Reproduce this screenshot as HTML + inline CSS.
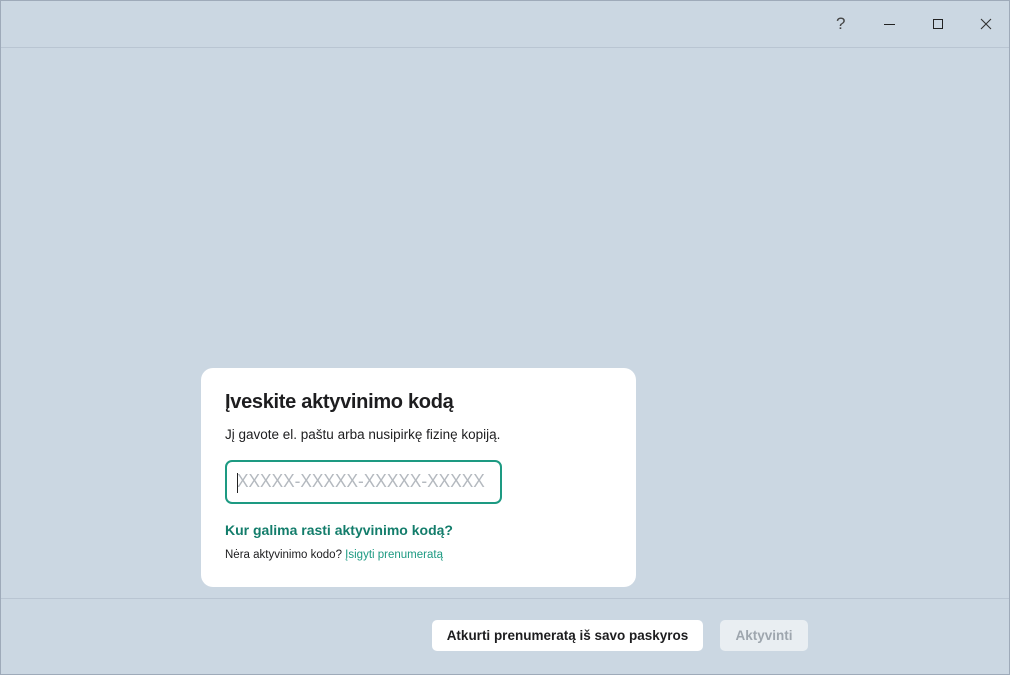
<!DOCTYPE html>
<html><head><meta charset="utf-8"><style>
*{margin:0;padding:0;box-sizing:border-box}
body{width:1010px;height:675px;background:#cbd7e2;font-family:"Liberation Sans",sans-serif;position:relative;overflow:hidden}
.frame{position:absolute;inset:0;border:1px solid #9eaab9}
.hl{position:absolute;left:1px;right:1px;height:1px;background:#b9c5d2}
.card{position:absolute;left:201px;top:368px;width:435px;height:219px;background:#fff;border-radius:12px}
h1{position:absolute;left:24px;top:23px;font-size:20px;font-weight:bold;color:#1d1d1f;letter-spacing:-0.3px;white-space:nowrap}
.sub{position:absolute;left:24px;top:59px;font-size:13.5px;color:#1d1d1f;white-space:nowrap}
.inp{position:absolute;left:24px;top:92px;width:277px;height:44px;border:2px solid #1d9a82;border-radius:7px;overflow:hidden}
.ph{position:absolute;left:10px;top:9px;font-size:18px;color:#b4b9bf;white-space:nowrap;transform:scaleX(0.96);transform-origin:left}
.cur{position:absolute;left:10px;top:11px;width:1px;height:20px;background:#222}
.link{position:absolute;left:24px;top:154px;font-size:14px;font-weight:bold;color:#137d6b;white-space:nowrap}
.no{position:absolute;left:24px;top:181px;font-size:11.5px;color:#1d1d1f;white-space:nowrap}
.no span{color:#1d9a82}
.btn{position:absolute;top:620px;height:31px;border-radius:5px;font-size:13.5px;font-weight:bold;text-align:center;line-height:31px;white-space:nowrap}
</style></head><body>
<div class="frame"></div>
<div class="hl" style="top:47px"></div>
<div class="hl" style="top:598px"></div>
<div style="position:absolute;left:836px;top:14px;font-size:17px;color:#444">?</div>
<div style="position:absolute;left:884px;top:24px;width:11px;height:1px;background:#222"></div>
<div style="position:absolute;left:933px;top:19px;width:10px;height:10px;border:1px solid #222"></div>
<svg style="position:absolute;left:980px;top:18px" width="12" height="12"><path d="M1 1L11 11M11 1L1 11" stroke="#333" stroke-width="1.1"/></svg>
<div class="card">
<h1>Įveskite aktyvinimo kodą</h1>
<div class="sub">Jį gavote el. paštu arba nusipirkę fizinę kopiją.</div>
<div class="inp"><div class="ph">XXXXX-XXXXX-XXXXX-XXXXX</div><div class="cur"></div></div>
<div class="link">Kur galima rasti aktyvinimo kodą?</div>
<div class="no">Nėra aktyvinimo kodo? <span>Įsigyti prenumeratą</span></div>
</div>
<div class="btn" style="left:432px;width:271px;background:#fff;color:#1d1d1f">Atkurti prenumeratą iš savo paskyros</div>
<div class="btn" style="left:720px;width:88px;background:#e9eef2;color:#9ea6ae">Aktyvinti</div>
</body></html>
